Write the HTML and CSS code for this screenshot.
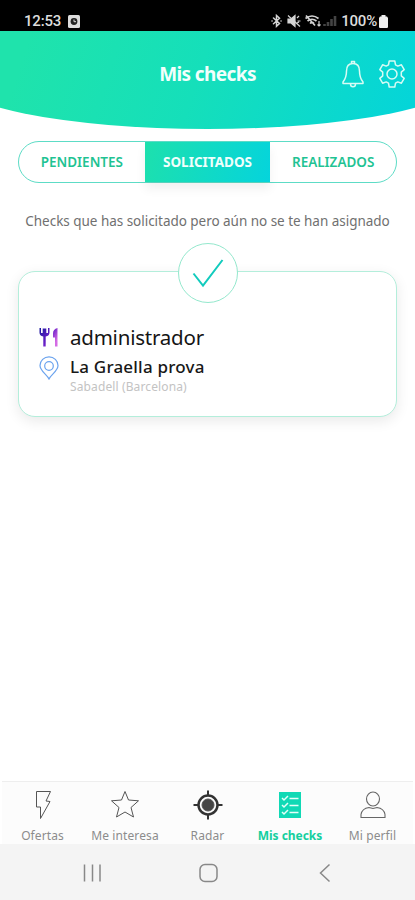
FILE: index.html
```html
<!DOCTYPE html>
<html lang="es">
<head>
<meta charset="utf-8">
<title>Mis checks</title>
<link rel="stylesheet" href="styles.css">
</head>
<body>
<div class="status">
  <span class="clock">12:53</span>
  <svg class="alarm" width="12" height="13" viewBox="0 0 12 13"><rect width="12" height="13" rx="1.5" fill="#ddd"/><circle cx="6" cy="6.5" r="3.4" fill="#222"/><path d="M6 4.5v2.2h2" stroke="#ddd" fill="none"/></svg>
  <svg class="signals" width="66" height="14" viewBox="0 0 66 14" fill="none" stroke="#d4d4d4" stroke-width="1.2">
    <path d="M2.500 4l6 5.500-3 2.700V1.500l3 2.800-6 5.500M1 7h.1M10 7h.1" stroke-width="1.500" stroke-linecap="round"/>
    <path d="M17 5h3l4-3.500v11l-4-3.500h-3z" fill="#d4d4d4"/><path d="M17 1.500l12 11M26 4l2-2M26.500 7h3M26 9l2-1"/>
    <path d="M34.500 4.500q6.500-5 13 0M36.500 7q4.500-3.500 9 0M39 9.500q2-2 4 0M35 1.500l9 10" stroke-width="1.700"/><path d="M48 12V7m-1.500 3.500L48 12l1.500-1.500"/>
    <path d="M53.500 12v-2M57 12V8M60.500 12V5M64 12V2" stroke="#444" stroke-width="2.600"/>
  </svg>
  <span class="charge">100%</span>
  <svg class="battery" width="9" height="13" viewBox="0 0 9 13"><path d="M2.500 0h4v1.500H8L9 3v9.200l-.8.800H.8L0 12.200V3l1-1.500h1.500z" fill="#eee"/></svg>
</div>
<header class="header">
  <div class="curve"></div>
  <h1 class="title">Mis checks</h1>
  <div class="actions">
    <svg width="24" height="28" viewBox="0 0 24 28" fill="none" stroke="#d8fbf4" stroke-width="1.500" stroke-linejoin="round"><path d="M12 3.500c-4.500 0-6.500 3.200-6.500 7.500 0 5.500-1 8-3.500 11v1.500h20V22c-2.500-3-3.500-5.500-3.500-11 0-4.300-2-7.500-6.500-7.500zM10.500 3.500V1.500h3v2M9.500 24q0 2.800 2.500 2.800t2.500-2.800"/></svg>
    <svg width="28" height="28" viewBox="0 0 28 28" fill="none" stroke="#d8fbf4" stroke-width="1.500" stroke-linejoin="round"><circle cx="14" cy="14" r="5"/><path d="M11.200 1h5.600l.7 3.800 2.300 1.300 3.600-1.300 2.800 4.800-2.900 2.500v2.800h0v1l2.900 2.500-2.800 4.800-3.600-1.300-2.300 1.300-.7 3.800h-5.600l-.7-3.800-2.300-1.300-3.600 1.300-2.800-4.800 2.900-2.500v-3.800L1.800 9.600l2.800-4.800 3.600 1.300 2.300-1.300z"/></svg>
  </div>
</header>
<main class="content">
  <nav class="tabs">
    <span class="tab"><b>PENDIENTES</b></span>
    <span class="tab active"><b>SOLICITADOS</b></span>
    <span class="tab"><b>REALIZADOS</b></span>
  </nav>
  <p class="hint">Checks que has solicitado pero aún no se te han asignado</p>
  <section class="card">
    <div class="badge"><svg width="32" height="30" viewBox="0 0 32 30" fill="none" stroke="#12cbbd" stroke-width="2"><path d="M1.500 15.500L11 27.500 30.500 2"/></svg></div>
    <div class="row role">
      <svg width="20" height="20" viewBox="0 0 20 20"><defs><linearGradient id="fork" x2="1" y2=".6"><stop stop-color="#1a1a9c"/><stop offset=".6" stop-color="#6a1fc8"/><stop offset="1" stop-color="#d46be4"/></linearGradient></defs><path d="M.5 1v4.500q0 3.500 3.800 4V19.500h2.400V9.500q3.800-.5 3.800-4V1H9v5H7.300V1.500H3.700V6H2V1zM18.500 1q-4.500 1-4.500 5.500v4h2v9h2.500z" fill="url(#fork)"/></svg>
      <span class="name">administrador</span>
    </div>
    <div class="row place">
      <svg width="20" height="24" viewBox="0 0 20 24" fill="none" stroke="#6ba3ee" stroke-width="1.200"><path d="M10 23C8 18.500 1 15 1 9.500a9 8.700 0 0118 0C19 15 12 18.500 10 23z"/><circle cx="10" cy="10" r="4.300"/></svg>
      <div><div class="venue">La Graella prova</div><div class="city">Sabadell (Barcelona)</div></div>
    </div>
  </section>
</main>
<nav class="bottom">
  <div class="item"><svg width="30" height="30" viewBox="0 0 30 30" fill="none" stroke="#555" stroke-width="1"><path d="M8.500 1.500h14l-4.500 9.500 4 .5-9.500 17V17h-4z"/></svg><span>Ofertas</span></div>
  <div class="item"><svg width="30" height="30" viewBox="0 0 30 30" fill="none" stroke="#555" stroke-width="1"><path d="M15 1.500l3.500 8.500 10 .8-7.500 6.700 2.500 9.500-8.500-5-8.500 5L9 17.500 1.500 10.800l10-.8z"/></svg><span>Me interesa</span></div>
  <div class="item"><svg width="30" height="30" viewBox="0 0 30 30" fill="none" stroke="#333"><circle cx="15" cy="15" r="9.500" stroke-width="2.500"/><circle cx="15" cy="15" r="6" fill="#444" stroke="#555"/><path d="M15 .5v5M15 24.500v5M.5 15h5M24.500 15h5" stroke-width="2"/></svg><span>Radar</span></div>
  <div class="item on"><svg width="30" height="30" viewBox="0 0 30 30"><rect x="4" y="2" width="22" height="26" fill="#10d9b5"/><path d="M7 8l2 2 4-4M7 15l2 2 4-4M7 22l2 2 4-4M14.500 8.500h9M14.500 15.500h9M14.500 22.500h9" fill="none" stroke="#e4fff9" stroke-width="1.500"/></svg><span>Mis checks</span></div>
  <div class="item"><svg width="30" height="30" viewBox="0 0 30 30" fill="none" stroke="#666" stroke-width="1.100"><ellipse cx="15" cy="9" rx="6.500" ry="7"/><path d="M3 27.500v-3q1-6 8-7l4 1 4-1q7 1 8 7v3z"/></svg><span>Mi perfil</span></div>
</nav>
<div class="system">
  <svg width="20" height="20" viewBox="0 0 20 20" stroke="#888" stroke-width="1.500"><path d="M2.500 1.500v17M10.500 1.500v17M18 1.500v17"/></svg>
  <svg width="20" height="20" viewBox="0 0 20 20" fill="none" stroke="#888" stroke-width="1.500"><rect x="1" y="1.500" width="17" height="17" rx="5"/></svg>
  <svg width="20" height="20" viewBox="0 0 20 20" fill="none" stroke="#888" stroke-width="1.500"><path d="M14.500 1.500L5.500 10l9 8.500"/></svg>
</div>
</body>
</html>
```
FILE: styles.css
```css
* { box-sizing: border-box; }
body { margin: 0; width: 415px; height: 900px; display: flex; flex-direction: column; background: #fff; font-family: "Noto Sans", sans-serif; overflow: hidden; }
svg { display: block; flex: none; }
span, h1, p, b, .venue, .city { white-space: nowrap; }

.status { height: 31px; background: #000; color: #ddd; display: flex; align-items: center; padding: 11px 27px 0 24px; font: 500 15px/20px Roboto, sans-serif; }
.clock { width: 44px; letter-spacing: -0.2px; }
.signals { margin-left: auto; margin-right: 4px; }
.charge { letter-spacing: -0.2px; margin-right: 2px; }

.header { position: relative; height: 98px; overflow: hidden; display: flex; justify-content: center; }
.curve { position: absolute; inset: 0 -52px; border-radius: 0 0 50% 50% / 0 0 53px 53px; background: linear-gradient(108deg, #1fe3ac 15%, #15dfba 48%, #05d5d8 88%); }
.title { position: relative; margin: 0; padding-top: 30px; font-size: 19px; line-height: 26px; font-weight: 700; color: #f2fffc; letter-spacing: -0.6px; }
.actions { position: absolute; right: 9px; top: 29px; display: flex; gap: 13px; }

.content { flex: 1; padding: 12px 18px 0; }
.tabs { display: flex; height: 42px; border: 1px solid #5ddcc6; border-radius: 21px; }
.tab { flex: 1; display: flex; align-items: center; justify-content: center; color: #1fc393; font-size: 13.500px; padding-bottom: 1px; }
.tab b { font-weight: 600; }
.tab.active { color: #f0fffc; background: linear-gradient(105deg, #1de0ad, #05d4dc); box-shadow: 0 7px 10px rgba(0, 0, 0, .06); }
.tab.active b { font-weight: 700; }
.hint { margin: 28px 0 0; text-align: center; font-size: 13.500px; line-height: 20px; color: #707070; letter-spacing: -0.03px; }
.card { position: relative; margin-top: 40px; height: 146px; border: 1.500px solid #b4eedb; border-radius: 17px; padding: 52px 0 0 20px; background: #fff; box-shadow: 0 4px 14px rgba(0, 0, 0, .09); }
.badge { position: absolute; left: 50%; top: -29px; width: 60px; height: 60px; margin-left: -30px; border: 1px solid #94e8cd; border-radius: 50%; background: #fff; display: flex; align-items: center; justify-content: center; }
.row { display: flex; gap: 11px; }
.role { height: 32px; align-items: center; padding-bottom: 6px; }
.name { font-size: 20.500px; line-height: 26px; color: #151515; letter-spacing: -0.22px; }
.venue { font-size: 17px; line-height: 22px; color: #181818; font-weight: 500; letter-spacing: 0.200px; }
.city { font-size: 12px; line-height: 17px; color: #c3c3c3; letter-spacing: 0.120px; }

.bottom { height: 63px; margin: 0 2px; display: grid; grid-template-columns: repeat(5, 82.500px); justify-content: center; background: #fcfcfc; border-top: 1px solid #eee; padding-top: 8px; }
.item { display: flex; flex-direction: column; align-items: center; font-size: 12px; line-height: 16px; color: #8c8c8c; }
.item span { margin-top: 8px; letter-spacing: 0.100px; }
.item.on { color: #14cf9e; font-weight: 700; }
.item.on span { letter-spacing: -0.050px; }
.system { height: 56px; background: #f4f4f4; display: flex; justify-content: space-between; padding: 19px 80px 0 82px; }
```
